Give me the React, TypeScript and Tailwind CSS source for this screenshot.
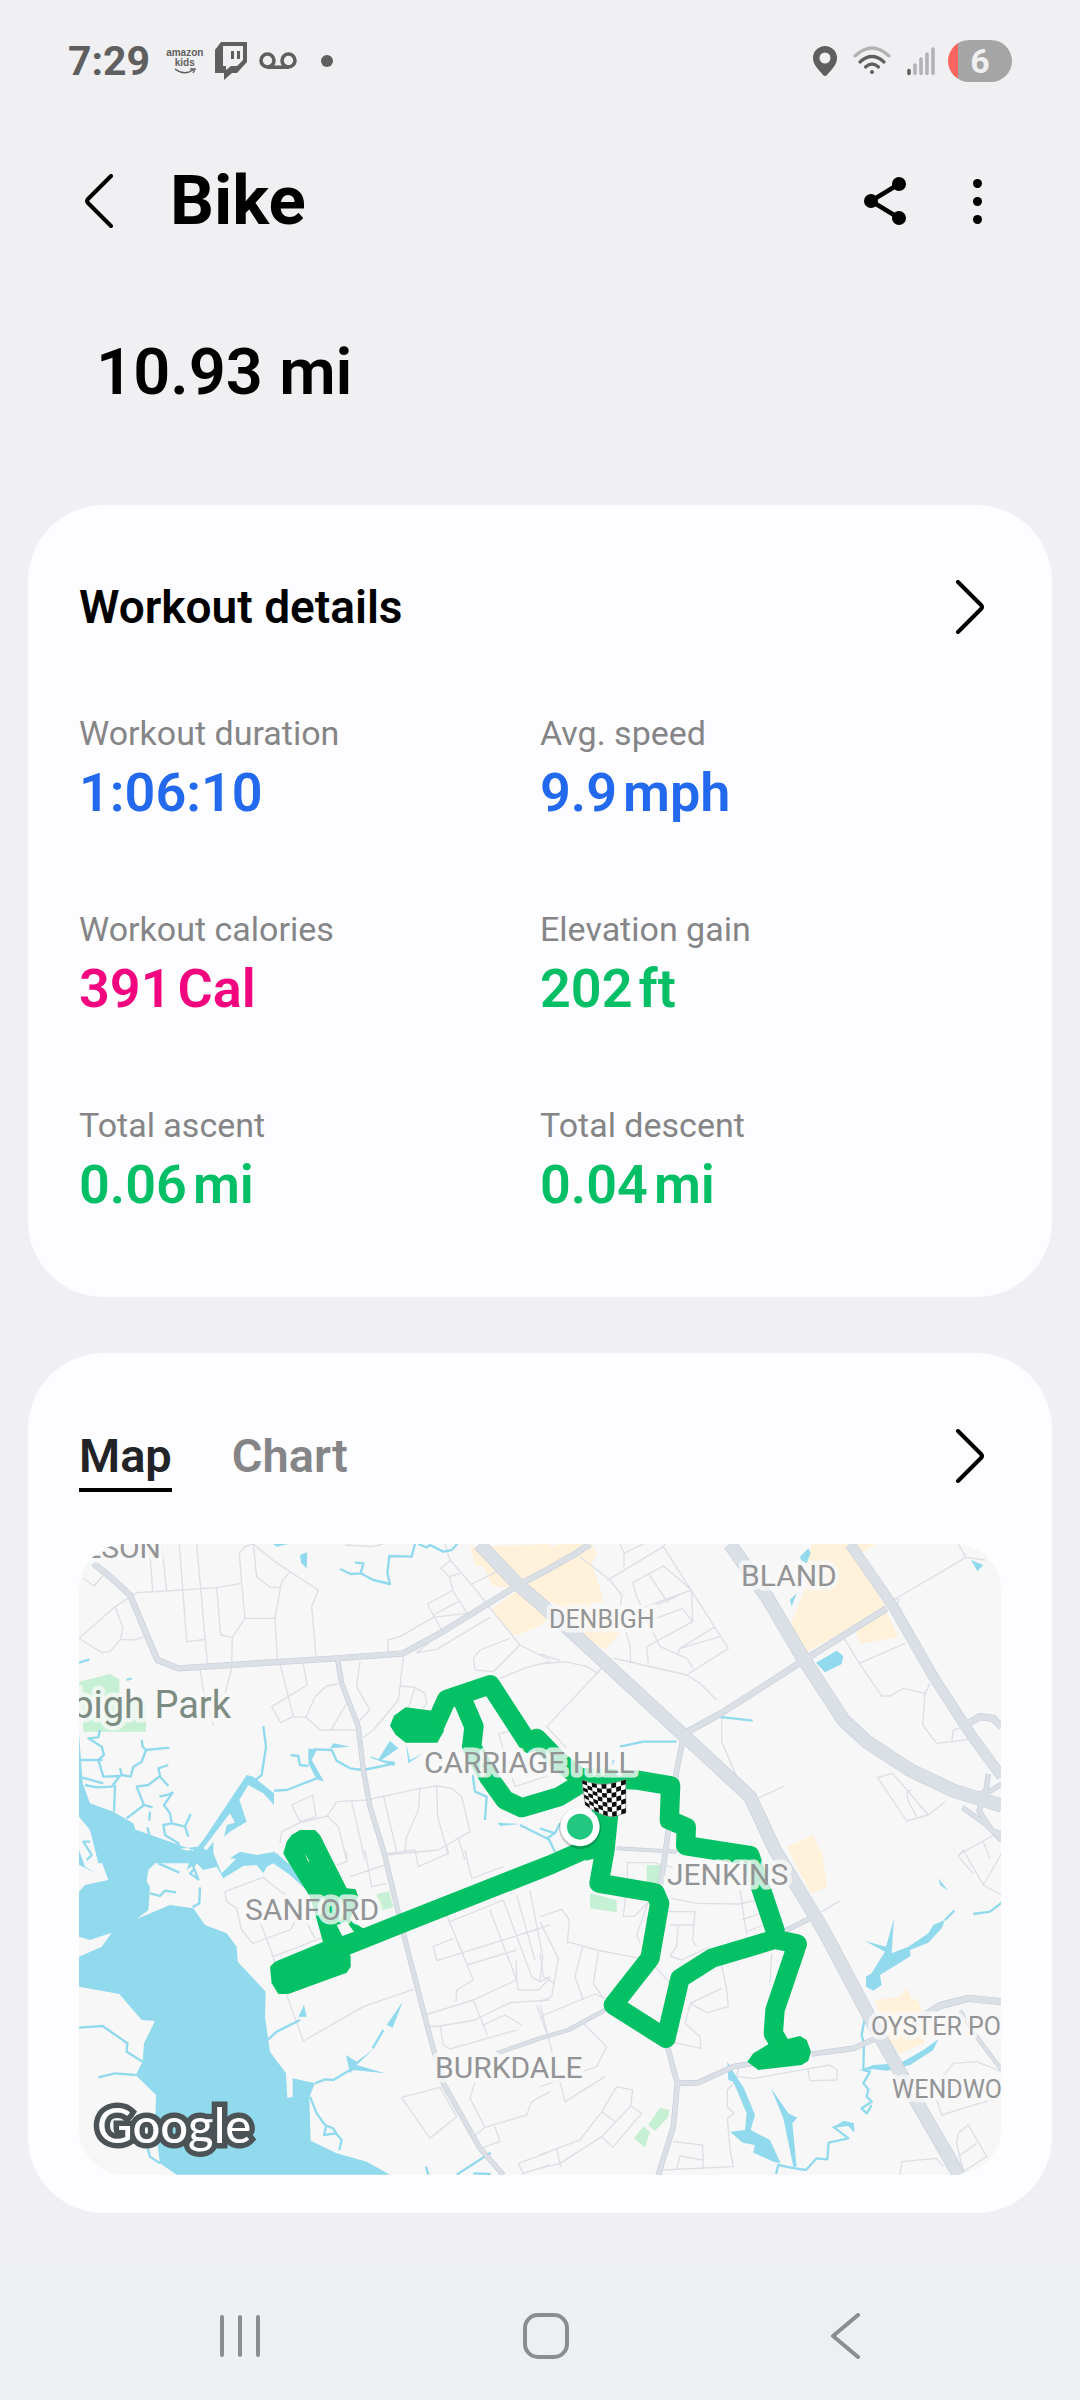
import { useState } from 'react'
import { clsx } from 'clsx'

type Stat = { label: string; value: string; unit?: string; color: string }

const STATS: Stat[] = [
  { label: 'Workout duration', value: '1:06:10', color: 'text-[#2269ee]' },
  { label: 'Avg. speed', value: '9.9', unit: 'mph', color: 'text-[#2269ee]' },
  { label: 'Workout calories', value: '391', unit: 'Cal', color: 'text-[#f2057f]' },
  { label: 'Elevation gain', value: '202', unit: 'ft', color: 'text-[#05bf66]' },
  { label: 'Total ascent', value: '0.06', unit: 'mi', color: 'text-[#05bf66]' },
  { label: 'Total descent', value: '0.04', unit: 'mi', color: 'text-[#05bf66]' },
]

type Road = { d: string; w: number }
type Tile = {
  at: string
  parks: string
  shops: string
  water: string
  creeks: string
  streets: string
}

// The map is made of four tiles, drawn at three units per pixel
const TILES: Tile[] = [
  {
    at: 'translate(-27 -42)',
    parks: 'M27 455L120 432 148 448V515H228V605H40V560H27z',
    shops: 'M1200 50L1440 42V255L1415 285 1335 318 1262 240 1330 190 1345 182 1265 165 1240 110 1215 105z',
    water:
      'M27 610L38 760 60 820 130 845 190 880 200 910 300 950 370 965 400 930 530 735 550 740 612 790 612 825 580 790 535 765 508 810 530 875 480 905 462 920 470 885 495 878 480 850 400 955 440 1000H85L60 900 27 860zM690 75L712 67 710 115 693 98zM610 42H655L620 50zM715 655L740 660 725 690 762 755 740 748 715 700zM780 655L840 650 790 640zM900 678L925 688 960 632 985 655 935 690 975 695 970 708 905 685zM1008 640L1020 690 1060 670 1015 700zM480 985L510 965 560 975 615 965 610 1000zM1283 878L1350 882 1290 888z',
    creeks:
      'M810 117L842 132 872 130 880 100 855 98M872 130L910 150 960 162 952 130 958 78 1025 80 1035 42M1045 42L1070 52 1080 45 1120 65 1145 60 1162 42M580 588L588 650 575 735 550 755M612 782L650 780 740 745M662 675L685 678 690 705 715 708M730 658L785 660 800 692 840 715 880 720 975 700M215 630L218 650 228 660 298 653M228 660L215 695 190 710 182 740 155 735 150 715M90 600L85 622 55 625 95 650 102 675 85 690 100 740 150 738 125 770 80 772 45 765M27 690H98M27 740L100 760M135 765L132 845M170 865L222 825 200 770 235 765 270 738 265 715 295 705M270 740L295 768M222 825L248 832M240 845L238 872M232 892L242 930M268 800L290 795 308 788 282 825 300 850 305 880 280 885 285 915 325 940 330 960M305 880L345 890 362 852M345 890L355 920M1208 735L1215 785 1250 800 1245 870M1350 885L1380 900 1440 930M60 935H40L65 975 50 990M170 450L185 445M27 398L58 388',
    streets:
      'M27 325L135 230 175 205 200 188 290 183 440 173 515 160M135 230L158 290 152 328 120 365 95 368 27 325M152 328L190 330 225 320M40 145L72 168 98 138M238 42L248 183M275 42L290 183M328 42L350 335 408 328M380 42L412 400M440 173L452 315 487 322 485 400M487 322L525 265H615L635 155 660 125 745 180 725 230 738 380M515 160L508 70 525 50 550 42 560 140 600 172H630M550 42L615 95 660 125M615 265L622 385M525 265L515 160M390 415L400 480 430 585M485 415L465 490M630 400L670 560M698 395L712 465 660 497 605 530 632 578 670 560 708 562 750 600 858 600M708 562L735 500 770 468 803 462M830 520L783 600M870 395L860 470 900 540 865 575M1000 380L990 470 985 510 910 600 880 622M990 468L1035 472 1065 490 1070 520 1045 560M1035 472L1010 550M825 45L905 50 940 42M955 368L953 330 990 320 1090 262 1190 250M1125 42L1140 90 1210 170 1265 240 1350 345 1440 390M1140 92L1112 115 1138 140 1170 130M1138 140L1150 185 1193 252M1150 180L1072 222 1115 300M1090 255L1165 215M1205 162L1280 125M1110 310L1040 368 1100 358 1260 262M1350 345L1320 375 1270 425 1215 420 1210 385 1230 360 1320 325M1440 395L1370 412 1290 445M665 825L728 795 738 860 690 875 665 825M630 940L635 905 690 878 772 858 800 815 890 810 1050 775 1100 768 1145 775 1175 800 1200 905 1165 925 1105 960 945 975M772 858L805 890 830 990M845 815L885 990M940 795L980 965M1050 775L1045 840 1010 920 1005 965M1100 768L1103 860 1135 975M1165 925L1185 990M1285 610L1335 770 1440 735M1285 612L1330 600',
  },
  {
    at: 'translate(1383 -42)',
    parks: '',
    shops:
      'M0 60L60 42H155L170 70 155 100 185 190 190 215 150 220 240 310 195 360 80 290 40 220 0 190zM815 42H920L1040 235 800 365 752 285 770 235 800 170 800 100zM945 300L1040 245 1075 320 960 342zM740 950L820 915 850 990V1030H780zM940 42H1010L965 68z',
    water:
      'M780 80L805 55 812 70 800 100 785 95zM750 210L770 190 755 230zM828 398L890 362 910 378 905 402 855 427zM1293 90L1330 105 1312 124z',
    creeks: 'M240 650L310 635H410M215 705L220 690M470 590L532 560 638 572M0 895L45 910 20 925M45 910L60 880M25 925L45 965',
    streets:
      'M0 372L60 392M0 402L75 395 140 410 170 428 185 415 20 590 80 655M120 80L210 150 245 195 240 250 270 345 272 400M200 152L370 50 375 42M240 42L252 70V110M252 70L310 42M370 50L565 355 440 435 480 460 530 510M278 158L370 108 455 180 458 275 320 350M278 158L290 200 360 350 440 385 460 415M290 240L455 180M305 280L430 235M325 130L385 220M350 225L410 200M430 240L458 275M412 375L420 355 540 320M420 355L525 290M220 385L245 390 440 435M545 550V635L590 740M630 815L730 770M320 350L325 400M912 325L958 400 1025 498H1050L1090 475 1155 490 1170 460M958 400L1095 340M1155 490L1148 585 1190 640 1235 635 1285 628M1235 635L1240 600 1275 590M1060 210L1278 82 1255 42M1278 82L1335 90M1040 205L1078 208 1065 235M1012 742L1058 730 1165 855 1100 873 1012 742M1165 855L1215 815M1100 785L1105 815 1130 860M1100 785L1115 780M1255 975L1370 910M1330 935L1350 985',
  },
  {
    at: 'translate(-27 918)',
    parks: 'M920 132L958 124 970 172 930 182z',
    shops: '',
    water:
      'M60 -60L115 90 45 105 27 125V260L60 270 125 248 95 290 27 320V410L148 432 215 510 255 513 222 580 218 635 197 675 258 735 255 830 270 940 320 974H960L890 935 800 910 722 872 718 740 735 700 668 685V740L652 744 648 670 600 605 585 500 587 425 503 335 500 290 470 250 405 225 370 175 300 165 200 207 235 180 240 110 230 95 235 60 280 15 300 0 380 -10 410 0 430 -25 430 10 455 70 505 20 570 15 620 10 660 45 720 130 660 75 610 40 590 50 580 70 560 45 520 48 460 85 440 50 400 60 380 40 350 60 370 0 200 -60zM685 500L702 465 710 500zM950 525L998 455 968 533zM828 615L860 635 910 598 860 645 945 670 850 660 840 670zM27 0L45 50 80 70 27 45z',
    creeks:
      'M27 533L98 528 172 580 170 605 218 635M85 682L135 670 197 675M595 568L620 545 690 510M940 540L908 595M840 660L790 690 765 688 735 700M720 740L740 790 765 825 790 835 798 850 762 855 768 830M798 850L815 870 808 900M265 40L328 68M240 130L270 138 285 122 318 127M390 112L388 160 368 172M1068 950L1075 974M1160 974L1262 908M1210 970L1262 972M200 885L232 890 240 920 270 940M360 0L385 25 370 50 385 88 360 70 375 55',
    streets:
      'M465 125L580 82 600 100 680 160 735 265M465 125L470 155 500 175 515 240 548 280 660 240 685 200M570 215L610 320 758 262M650 435L700 573 880 470 1030 418M830 5L830 35 800 45M840 80L945 45M885 0L905 110 950 100M945 12L1035 0M1035 0L1045 50 1135 10 1130 -10M1185 0L1205 85 1300 50M1065 495L1210 450 1340 390 1338 330M1065 530L1110 528 1215 510 1320 458 1440 450M1110 528L1120 585 1140 597 1270 560 1340 540M1210 450L1252 555M1240 525L1305 495 1355 525M1140 215L1300 150M1130 195L1210 390 1160 420 1158 455M1150 265L1090 290 1100 332 1300 270 1440 225M1190 345L1340 300M1260 180L1340 390M1300 150L1385 380 1410 395 1440 380M1340 135L1395 330M1380 122L1418 320 1410 390M1340 390L1345 420 1405 420 1440 385M1400 465L1430 550M995 742L1110 712 1160 800 1080 865 995 742M1215 695L1200 745 1245 832 1370 795 1385 755 1440 725M1245 832L1210 860M1275 830L1290 875 1240 892M1345 940L1440 905M1345 940L1360 970 1440 945M605 310L650 430',
  },
  {
    at: 'translate(1383 918)',
    parks: 'M320 45H365V100H320zM150 130L230 150V187L150 175zM282 865L310 828 330 845 315 893zM325 825L360 773 388 780 385 800 345 843z',
    shops: 'M1005 450L1080 440 1100 415 1115 450 1130 445 1150 490 1185 510 1150 580 1080 612 1040 560zM750 10L845 0 862 110 815 132z',
    water:
      'M978 380L995 370 1035 305 975 273 1038 290 1062 205 1055 310 1105 290 1165 250 1180 225 1215 210 1205 235 1165 278 1110 300 1112 318 1020 375 1025 405 1000 422 978 410zM1195 85L1225 123 1200 105zM562 635L580 665 612 715 645 795 632 840 690 870 722 940 700 935 640 908 645 885 608 878 570 845 615 840 620 790 580 695 565 690zM693 715L745 790 772 803 757 820 770 950 760 950 730 805zM955 662L1000 645 1080 640 1150 600 1195 568 1180 600 1110 645 1040 662 1000 658zM872 835L912 812 942 820 943 848 925 828z',
    creeks:
      'M1215 210L1243 182M1300 192L1350 185 1385 158M975 500L965 555 972 580 970 660 990 665 970 700 985 718 980 740 995 755 965 775 980 790 995 765M708 972L715 945 765 955 798 960 830 925 862 928 866 878 925 865 880 830',
    streets:
      'M0 215L55 325 35 440 0 455M0 200L65 178 88 210 82 280M82 275L170 300 300 325M128 290L105 380 130 450M175 305L160 400 190 445M0 310L10 380 45 400M0 500L165 432 195 445M0 465L40 620 75 755 195 680M130 520L200 590 170 650 0 710M262 35V90L250 200 285 198 325 155M262 38H340L400 52M395 145L470 160 600 162M380 185H465L458 270 470 290M600 120L620 255M605 210L660 190M600 162L650 150M390 225H460M415 225L410 290 390 318 425 330 510 290M620 245L670 225M695 310L690 400M400 410L340 345M325 155L290 255 300 280M545 345L560 420 565 470 500 488 450 460 545 415M450 465L435 520 480 560 482 595 390 575M595 655L590 680 640 685 870 645 892 660 890 690 810 692 803 655M590 690L562 720V770L582 790 562 805 570 900 580 950 370 960M400 875L488 885 490 955M488 930L420 918 410 958M0 915L120 870 185 785 230 710 278 720 272 768 305 790 218 892 185 860 60 940 0 955M185 785L225 815M185 860L272 768M50 895L62 950M1255 20L1270 0 1330 105 1385 135M1255 20L1300 70M1330 105L1385 10M1190 750L1205 795 1385 740M1310 635L1240 640 1200 690M1310 635L1385 665M1255 850L1285 825 1340 920 1270 965 1250 880 1255 850M1255 920L1310 880M1080 974L1085 935 1190 925 1210 950M845 185L900 152',
  },
]

const ROADS: Road[] = [
  { d: 'M1613 913L1793 923', w: 8 },
  { d: 'M43 58L93 98 153 153 235 348 298 373 613 353 773 343 973 328 1083 268 1318 123 1413 73 1483 33 1533 0', w: 15 },
  { d: 'M776 348L788 418 838 548 853 678 873 788 913 918 973 1168 1053 1478 1093 1618 1203 1813 1273 1893', w: 12 },
  { d: 'M1813 570L1923 510 2173 350 2423 193', w: 16 },
  { d: 'M1811 590L1793 680 1760 918 1745 1020', w: 13 },
  { d: 'M1763 1500L1795 1618 1783 1748 1738 1893M1795 1618L1858 1616 1963 1568 2023 1558M2198 1530L2323 1513 2403 1478', w: 13 },
  { d: 'M2503 1435L2583 1385 2668 1363 2768 1373', w: 18 },
  { d: 'M1578 1398L1468 1458 1383 1483 1253 1528', w: 9 },
  { d: 'M2103 1168L2193 1123', w: 12 },
  { d: 'M2643 1400L2693 1478 2768 1578', w: 9 },
  { d: 'M2668 538L2703 518 2743 523 2768 550', w: 18 },
  { d: 'M2728 690L2720 745 2650 762M2720 745L2700 800 2740 860 2768 870M2728 745L2768 720M2650 790L2720 840 2768 890', w: 12 },
  { d: 'M2313 0L2443 188 2563 398 2673 568 2768 698', w: 28 },
  { d: 'M1953 0L2063 158 2173 343 2293 528 2363 593 2493 678 2623 740 2768 785', w: 38 },
  { d: 'M1201 0L1318 123 1383 178 1483 268 1813 573 2013 758 2088 918 2233 1158 2403 1478 2533 1708 2640 1893', w: 37 },
]

const LABELS = [
  { text: 'OLSON', x: 82, y: 14, size: 'text-[30px]', anchor: 'end', fill: '#939496' },
  { text: 'DENBIGH', x: 470, y: 84, size: 'text-[25px]', anchor: 'start', fill: '#939496' },
  { text: 'BLAND', x: 662, y: 42, size: 'text-[30px]', anchor: 'start', fill: '#939496' },
  { text: 'Denbigh Park', x: 152, y: 174, size: 'text-[38px]', anchor: 'end', fill: '#7d8c82' },
  { text: 'CARRIAGE HILL', x: 345, y: 229, size: 'text-[30px]', anchor: 'start', fill: '#939496' },
  { text: 'SANFORD', x: 166, y: 376, size: 'text-[30px]', anchor: 'start', fill: '#939496' },
  { text: 'JENKINS', x: 588, y: 341, size: 'text-[30px]', anchor: 'start', fill: '#939496' },
  { text: 'BURKDALE', x: 356, y: 534, size: 'text-[30px]', anchor: 'start', fill: '#939496' },
  { text: 'OYSTER PO', x: 792, y: 491, size: 'text-[25px]', anchor: 'start', fill: '#939496' },
  { text: 'WENDWO', x: 813, y: 554, size: 'text-[25px]', anchor: 'start', fill: '#939496' },
] as const

const FLAG_COLS = 9
const FLAG_ROWS = 7

// Point on the waving flag at a given column and row line
function flagPoint(col: number, row: number) {
  const top = 12 * Math.sin(col / 2.7)
  const height = 74 + 26 * Math.min(1, col / 6)
  const lean = (row / FLAG_ROWS) * 10 * (1 - col / FLAG_COLS)
  return `${col * 14.6 + lean} ${top + (height * row) / FLAG_ROWS}`
}

function FinishFlag() {
  const cols = Array.from({ length: FLAG_COLS + 1 }, (_, c) => c)
  const cells = Array.from({ length: FLAG_COLS * FLAG_ROWS }, (_, i) => [i % FLAG_COLS, Math.floor(i / FLAG_COLS)])
  const top = cols.map(c => flagPoint(c, 0)).join(' ')
  const bottom = [...cols].reverse().map(c => flagPoint(c, FLAG_ROWS)).join(' ')
  return (
    <g transform="translate(1509 709)">
      <path d={`M${top} ${bottom}z`} fill="#fff" stroke="#9aa39d" strokeWidth="3" />
      {cells.filter(([c, r]) => (c + r) % 2 === 0).map(([c, r]) => (
        <path
          key={`${c}-${r}`}
          d={`M${flagPoint(c, r)} ${flagPoint(c + 1, r)} ${flagPoint(c + 1, r + 1)} ${flagPoint(c, r + 1)}z`}
          fill="#0c0c0c"
        />
      ))}
    </g>
  )
}

function RouteMap() {
  return (
    <svg
      viewBox="0 0 922 631"
      className="block w-full rounded-[46px] bg-[#f7f7f7] font-['Roboto',sans-serif]"
      role="img"
      aria-label="Route map"
    >
      <g transform="scale(0.33333)" strokeLinejoin="round" fill="none">
        {TILES.map(t => (
          <g key={t.at} transform={t.at}>
            <path d={t.parks} fill="#c5f0d4" />
            <path d={t.shops} fill="#fff1da" />
          </g>
        ))}
        {TILES.map(t => (
          <g key={t.at} transform={t.at}>
            <path d={t.streets} stroke="#dddfe7" strokeWidth="4" />
            <path d={t.water} fill="#91daed" />
            <path d={t.creeks} stroke="#91daed" strokeWidth="7" />
          </g>
        ))}
        {ROADS.map(r => (
          <path key={r.d} d={r.d} stroke="#c8d0dc" strokeWidth={r.w + 4} />
        ))}
        {ROADS.map(r => (
          <path key={r.d} d={r.d} stroke="#dae0e5" strokeWidth={r.w} />
        ))}

        {/* Recorded route */}
        <g stroke="#05c165" strokeWidth="58">
          <path d="M1503 720L1440 758 1328 791 1278 768 1228 698 1178 608 1185 548 1143 450" />
          <path
            d="M973 545L1063 555 1103 466 1234 422 1348 598 1373 583 1443 655 1503 700 1673 708 1775 725 1771 828 1822 850 1820 905 2013 935 2088 1158"
            strokeLinecap="round"
          />
          <path d="M1590 800L1578 918 1560 1018 1728 1046 1742 1078 1713 1243 1603 1383 1761 1483 1803 1303 1898 1243 2088 1186 2155 1200 2088 1398 2083 1468 2113 1520" />
          <path d="M1590 885L1413 963 973 1136 793 1208" />
        </g>
        <g fill="#05c165">
          <path d="M1520 800L1615 790 1600 930 1520 950z" />
          <path d="M933 545L945 515 980 490 1060 500 1095 560 1075 596H980L950 572z" />
          <path d="M2023 1528L2073 1498 2163 1476 2183 1488 2196 1523 2188 1550 2168 1563 2038 1578 2005 1553z" />
          <path d="M573 1268L588 1253 733 1193 803 1203 815 1238V1268L803 1286 628 1350H598L578 1318z" />
          <path d="M613 928L623 893 638 873 663 858H708L723 873 748 923 803 1033 830 1036 838 1058 813 1128 860 1158 813 1208 733 1198 708 1108 693 1058 621 943z" />
        </g>
        <path d="M773 1143L803 1133 825 1163 790 1176zM678 928L692 955 686 950z" fill="#f7f7f7" />
        <FinishFlag />
        <circle cx="1503" cy="852" r="63" fill="#00000030" />
        <circle cx="1503" cy="848" r="59" fill="#fff" />
        <circle cx="1503" cy="848" r="39" fill="#22c880" />
      </g>

      {LABELS.map(l => (
        <text
          key={l.text}
          x={l.x}
          y={l.y}
          textAnchor={l.anchor}
          fill={l.fill}
          stroke="#f9f9f9"
          strokeOpacity="0.8"
          strokeWidth="9"
          strokeLinejoin="round"
          paintOrder="stroke"
          className={l.size}
        >
          {l.text}
        </text>
      ))}
      <text
        x="18"
        y="599"
        fill="#fff"
        stroke="#4b5357"
        strokeWidth="11"
        paintOrder="stroke"
        className="font-['Lato',sans-serif] text-[49px] font-medium"
      >
        Google
      </text>
    </svg>
  )
}

function Chevron({ left = false }: { left?: boolean }) {
  return (
    <svg viewBox="0 0 30 54" className="h-[54px] w-[30px]" fill="none" stroke="#000" strokeWidth="4" strokeLinecap="round" strokeLinejoin="round">
      <path d={left ? 'M27 2L4 25Q2 27 4 29L27 52' : 'M3 2L26 25Q28 27 26 29L3 52'} />
    </svg>
  )
}

function StatusBar() {
  return (
    <div className="flex h-[122px] items-center justify-between px-[68px] text-[#5f5f60]">
      <div className="flex items-center">
        <span className="text-[41px] leading-[48px] font-bold">7:29</span>
        <div className="ml-4 flex flex-col items-center font-['Liberation_Sans',sans-serif] text-[10px] leading-[10px] font-bold">
          <span>amazon</span>
          <span>kids</span>
          <svg viewBox="0 0 22 6" className="h-[6px] w-[22px]" fill="none" stroke="currentColor" strokeWidth="1.4">
            <path d="M1 1Q10 8 19 2M16 1H21L19 5" />
          </svg>
        </div>
        <svg viewBox="0 0 34 38" className="ml-[11px] h-[38px] w-[34px]">
          <path d="M7 0H33V20L23 31H18L10 38V31H1V8z" fill="currentColor" />
          <path d="M9 4H29V18L23 24H17L12 28V24H9z" fill="#f0f0f2" />
          <path d="M17 9H20V17H17zM23 9H26V17H23z" fill="currentColor" />
        </svg>
        <svg viewBox="0 0 38 18" className="ml-[11px] h-[18px] w-[38px]" fill="none" stroke="currentColor" strokeWidth="3.6">
          <circle cx="8.500" cy="8.500" r="6.500" />
          <circle cx="29.500" cy="8.500" r="6.500" />
          <path d="M8 15.200H30" />
        </svg>
        <span className="ml-6 size-3 rounded-full bg-current" />
      </div>

      <div className="flex items-center">
        <svg viewBox="0 0 24 30" className="h-[30px] w-[24px]">
          <path d="M12 0A12 12 0 0 1 24 12C24 19 18 24 14 29Q12 31 10 29C6 24 0 19 0 12A12 12 0 0 1 12 0zM12 6.500A5.500 5.500 0 1 0 12 17.500 5.500 5.500 0 0 0 12 6.500z" fill="currentColor" />
        </svg>
        <svg viewBox="0 0 38 30" className="ml-4 h-[30px] w-[38px]" fill="none" stroke="currentColor" strokeWidth="3.200" strokeLinecap="round">
          <path d="M2 10Q19 -6 36 10" stroke="#b3b3b5" />
          <path d="M7 16Q19 5 31 16M12.500 21Q19 15 25.500 21" />
          <circle cx="19" cy="26" r="2" fill="currentColor" stroke="none" />
        </svg>
        <svg viewBox="0 0 28 30" className="ml-4 h-[30px] w-[28px]" strokeWidth="3.600" strokeLinecap="round">
          <path d="M2 24.500V27.500" stroke="#5f5f60" />
          <path d="M8 19V27.500M14 13V27.500M20 8V27.500M26 3V27.500" stroke="#b3b3b5" />
        </svg>
        <span className="ml-[13px] flex h-[42px] w-16 items-center justify-center overflow-hidden rounded-full bg-linear-to-r from-[#fb6560] from-16% to-[#a5a5a6] to-16% text-[34px] font-bold text-[#f0f0f2]">
          6
        </span>
      </div>
    </div>
  )
}

export default function App() {
  const [tab, setTab] = useState('Map')

  return (
    <div className="flex min-h-screen flex-col bg-[#f0f0f2] font-['Roboto',sans-serif] text-black">
      <StatusBar />

      <header className="flex h-[158px] items-center justify-between pr-[94px] pl-[84px]">
        <div className="flex items-center gap-14">
          <button aria-label="Back"><Chevron left /></button>
          <h1 className="text-[69px] leading-[80px] font-bold">Bike</h1>
        </div>
        <div className="flex items-center gap-[62px]">
          <button aria-label="Share">
            <svg viewBox="0 0 42 48" className="h-[48px] w-[42px]">
              <path d="M35 7L7 24 35 41" fill="none" stroke="#000" strokeWidth="4.500" />
              <circle cx="35" cy="7" r="7" />
              <circle cx="7" cy="24" r="7" />
              <circle cx="35" cy="41" r="7" />
            </svg>
          </button>
          <button aria-label="More options" className="flex w-[18px] flex-col items-center gap-[9px]">
            <span className="size-[9px] rounded-full bg-black" />
            <span className="size-[9px] rounded-full bg-black" />
            <span className="size-[9px] rounded-full bg-black" />
          </button>
        </div>
      </header>

      <p className="mt-[52px] px-24 text-[65px] leading-[80px] font-semibold">10.93 mi</p>

      <main className="mx-7 mt-[93px] flex flex-col gap-14">
        <section className="rounded-[76px] bg-[#fdfdff] px-[51px] pt-[66px] pb-[78px]">
          <div className="flex h-[72px] items-center justify-between pr-4">
            <h2 className="text-[46px] leading-[52px] font-semibold">Workout details</h2>
            <button aria-label="Open workout details"><Chevron /></button>
          </div>
          <dl className="mt-16 grid grid-cols-2 gap-y-[76px]">
            {STATS.map(s => (
              <div key={s.label}>
                <dt className="text-[34px] leading-[52px] text-[#858587]">{s.label}</dt>
                <dd className={clsx('flex gap-[6px] text-[54px] leading-[68px] font-semibold', s.color)}>
                  <span>{s.value}</span>
                  {s.unit && <span>{s.unit}</span>}
                </dd>
              </div>
            ))}
          </dl>
        </section>

        <section className="rounded-[76px] bg-[#fdfdff] px-[51px] pt-[67px] pb-[38px]">
          <div className="flex h-[72px] items-center justify-between pr-4">
            <div role="tablist" className="flex gap-[60px]">
              {['Map', 'Chart'].map(name => (
                <button
                  key={name}
                  role="tab"
                  aria-selected={tab === name}
                  onClick={() => setTab(name)}
                  className={clsx(
                    'h-[72px] border-b-4 pt-1 text-[47px] leading-[64px] font-semibold',
                    tab === name ? 'border-black text-[#222326]' : 'border-transparent text-[#858587]'
                  )}
                >
                  {name}
                </button>
              ))}
            </div>
            <button aria-label="Open map"><Chevron /></button>
          </div>
          <div className="mt-[52px]">
            <RouteMap />
          </div>
        </section>
      </main>

      <nav className="mt-auto flex h-[136px] items-center justify-between bg-[#ecf0f1] pt-2 pr-[217px] pl-[217px]">
        <button aria-label="Recent apps" className="w-[46px]">
          <svg viewBox="0 0 46 46" className="size-[46px]" stroke="#8a8e8e" strokeWidth="4" strokeLinecap="round">
            <path d="M5 4V42M23 4V42M41 4V42" />
          </svg>
        </button>
        <button aria-label="Home" className="w-[46px]">
          <svg viewBox="0 0 46 46" className="size-[46px]" fill="none" stroke="#8a8e8e" strokeWidth="4">
            <rect x="2" y="2" width="42" height="42" rx="13" />
          </svg>
        </button>
        <button aria-label="Back" className="w-[34px]">
          <svg viewBox="0 0 32 46" className="h-[46px] w-[32px]" fill="none" stroke="#8a8e8e" strokeWidth="4" strokeLinecap="round" strokeLinejoin="round">
            <path d="M29 2L4 23 29 44" />
          </svg>
        </button>
      </nav>
    </div>
  )
}
